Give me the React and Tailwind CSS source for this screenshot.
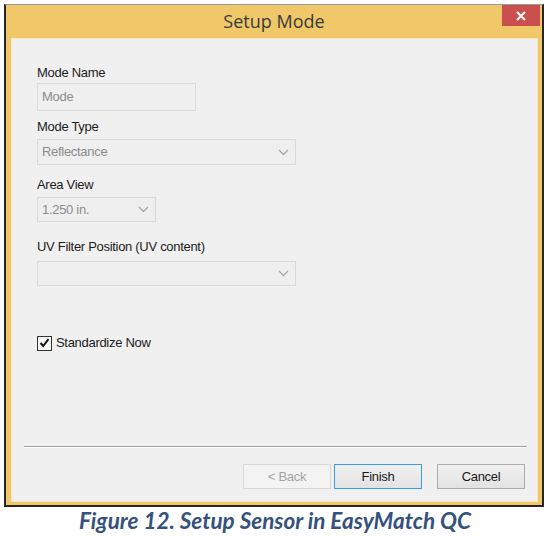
import React from 'react';

function Chevron() {
  return (
    <svg width="11" height="7" viewBox="0 0 11 7" className="shrink-0">
      <path d="M1 1 L5.5 5.5 L10 1" fill="none" stroke="#a8a8a8" strokeWidth="1.3" />
    </svg>
  );
}

function Combo({ value, w, h }) {
  return (
    <div className={`flex items-center justify-between pl-[4px] pr-[6px] border border-[#d9d9d9] bg-[#efefef] text-[#8c8c8c] ${w} ${h}`}>
      <span>{value}</span>
      <Chevron />
    </div>
  );
}

function Btn({ children, kind }) {
  const styles = {
    disabled: 'border-[#d8d8d8] bg-[#f3f3f3] text-[#a3a3a3]',
    default: 'border-[#3d9be8] bg-gradient-to-b from-[#f0f0f0] to-[#e3e3e3] text-[#1a1a1a]',
    normal: 'border-[#adadad] bg-gradient-to-b from-[#f0f0f0] to-[#e3e3e3] text-[#1a1a1a]',
  };
  return (
    <div className={`w-[88px] h-[25px] flex items-center justify-center border ${styles[kind]}`}>
      {children}
    </div>
  );
}

export default function App() {
  return (
    <div className="w-[550px] h-[539px] bg-white pt-[4px] pl-[4px] overflow-hidden">
      <div className="w-[540px] h-[503px] bg-[#f0c869] border-t border-t-[#9a9a9a] border-x-2 border-b-2 border-[#262626] flex flex-col">
        <div className="h-[33px] relative flex items-center justify-center">
          <span className="text-[18px] text-[#3a3a3a] font-['Open_Sans',sans-serif] leading-none -mt-[2px]">Setup Mode</span>
          <div className="absolute right-[2px] top-0 w-[38px] h-[21px] bg-[#c9504e] flex items-center justify-center">
            <svg width="10" height="10" viewBox="0 0 10 10">
              <path d="M1 1 L9 9 M9 1 L1 9" stroke="white" strokeWidth="2" />
            </svg>
          </div>
        </div>
        <div className="ml-[5px] mr-[4px] h-[464px] bg-[#f0f0f0] border border-[#f7e7bf] flex flex-col font-['Liberation_Sans',Arial,sans-serif] text-[13px] tracking-[-0.3px] text-[#1c1c1c]">
          <div className="pl-[25px] pt-[26px] flex flex-col">
            <div className="h-[16px] leading-[16px]">Mode Name</div>
            <div className="mt-[2px] w-[159px] h-[28px] border border-[#dcdcdc] bg-[#f0f0f0] text-[#8c8c8c] pl-[4px] flex items-center">Mode</div>
            <div className="mt-[8px] h-[16px] leading-[16px]">Mode Type</div>
            <div className="mt-[4px]"><Combo value="Reflectance" w="w-[259px]" h="h-[26px]" /></div>
            <div className="mt-[12px] h-[16px] leading-[16px]">Area View</div>
            <div className="mt-[4px]"><Combo value="1.250 in." w="w-[119px]" h="h-[25px]" /></div>
            <div className="mt-[17px] h-[16px] leading-[16px]">UV Filter Position (UV content)</div>
            <div className="mt-[6px]"><Combo value="" w="w-[259px]" h="h-[25px]" /></div>
            <div className="mt-[49px] flex items-center gap-[4px] h-[16px]">
              <div className="w-[15px] h-[15px] border border-[#333] bg-[#f8f8f8] flex items-center justify-center">
                <svg width="11" height="10" viewBox="0 0 11 10">
                  <path d="M1.5 5 L4.2 8 L9.5 1.2" fill="none" stroke="#111" strokeWidth="2" />
                </svg>
              </div>
              <span>Standardize Now</span>
            </div>
          </div>
          <div className="flex-1" />
          <div className="ml-[12px] mr-[10px] h-[2px] border-t border-[#a0a0a0] border-b border-b-white" />
          <div className="mt-[16px] mb-[12px] mr-[12px] flex justify-end">
            <Btn kind="disabled">&lt; Back</Btn>
            <div className="ml-[3px]"><Btn kind="default">Finish</Btn></div>
            <div className="ml-[15px]"><Btn kind="normal">Cancel</Btn></div>
          </div>
        </div>
      </div>
      <div className="-ml-[4px] w-[550px] h-[28px] leading-[28px] text-center font-['Lato',sans-serif] font-bold italic text-[22.5px] text-[#35517d]">
        Figure 12. Setup Sensor in EasyMatch QC
      </div>
    </div>
  );
}
